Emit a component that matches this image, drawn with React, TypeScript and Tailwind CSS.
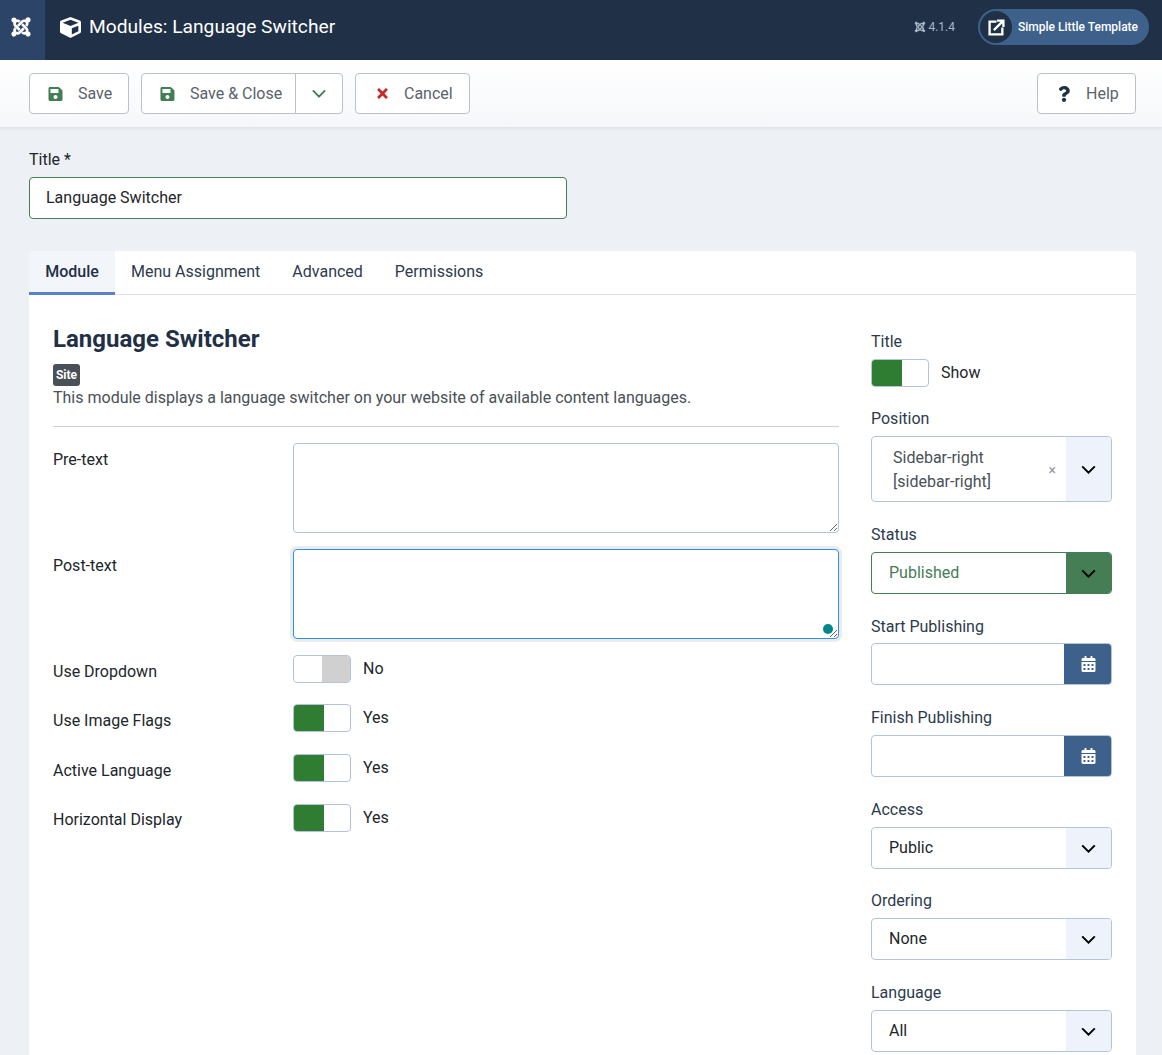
import { FaCube, FaJoomla, FaSave, FaTimes, FaQuestion, FaCalendarAlt } from "react-icons/fa";

function Chevron({ className = "" }: { className?: string }) {
  return (
    <svg viewBox="0 0 16 10" className={className} fill="none" stroke="currentColor" strokeWidth="2.2">
      <path d="M1 1.500l7 7 7-7" />
    </svg>
  );
}

function Toggle({ on, label }: { on: boolean; label: string }) {
  return (
    <div className="flex items-center">
      <div className="flex w-[58px] h-[28px] border border-[#b2c4dc] rounded-[4px] overflow-hidden bg-white">
        {on ? (
          <div className="w-[30px] bg-[#2e7d32]" />
        ) : (
          <>
            <div className="w-[28px]" />
            <div className="w-[28px] bg-[#d0d0d0]" />
          </>
        )}
      </div>
      <span className="ml-3 text-[#22262a]">{label}</span>
    </div>
  );
}

function Select({ value }: { value: string }) {
  return (
    <div className="flex h-[42px] border border-[#b2c4dc] rounded-[4px] overflow-hidden bg-white">
      <div className="flex-1 pl-[17px] leading-[40px] text-[#22262a]">{value}</div>
      <div className="w-[45px] bg-[#eef3fb] flex items-center justify-center text-black">
        <Chevron className="w-[15px] h-[9px]" />
      </div>
    </div>
  );
}

function DateField() {
  return (
    <div className="flex h-[42px] border border-[#b2c4dc] rounded-[4px] overflow-hidden bg-white">
      <div className="flex-1" />
      <div className="w-[48px] -my-px -mr-px bg-[#3e618c] flex items-center justify-center text-white">
        <FaCalendarAlt className="w-[15px] h-[16px]" />
      </div>
    </div>
  );
}

function ToolButton({ children, className = "" }: { children: React.ReactNode; className?: string }) {
  return (
    <div className={`flex items-center h-[41px] bg-white border border-[#b9c1cc] rounded-[4px] text-[#5a626c] whitespace-nowrap ${className}`}>
      {children}
    </div>
  );
}

export default function App() {
  return (
    <div className="h-[1055px] overflow-hidden bg-[#edf1f5] font-['Roboto',sans-serif] text-[16px] text-[#22262a]">
      {/* Header */}
      <header className="flex h-[60px] bg-[#1f3047] text-white">
        <div className="flex items-center justify-center w-[45px] h-full pb-[6px] pr-[4px] bg-[#2d4469]">
          <FaJoomla className="w-[22px] h-[22px]" />
        </div>
        <div className="flex flex-1 items-center pb-[6px]">
          <FaCube className="ml-[15px] w-[21px] h-[21px]" />
          <h1 className="ml-[8px] text-[19.2px] leading-[24px]">Modules: Language Switcher</h1>
          <div className="ml-auto flex items-center text-[12px] text-[#a9b6c6]">
            <FaJoomla className="w-[12px] h-[12px] mr-[2px]" />
            4.1.4
          </div>
          <div className="ml-[23px] mr-[13px] flex items-center w-[171px] h-[36px] rounded-full bg-[#3e618c] pl-[2px]">
            <div className="flex items-center justify-center w-[32px] h-[32px] rounded-full bg-[#1f3047]">
              <svg viewBox="0 0 16 16" className="w-[17px] h-[17px]" fill="none" stroke="white" strokeWidth="2.2">
                <path d="M8 2.500H1.500v12h12V8" />
                <path d="M5.500 10.500L13.500 2.500M8.500 1.500h6v6" />
              </svg>
            </div>
            <span className="ml-[6px] text-[12px] font-medium text-white whitespace-nowrap">Simple Little Template</span>
          </div>
        </div>
      </header>

      {/* Toolbar */}
      <div className="flex items-center h-[67px] pl-[29px] pr-[26px] bg-gradient-to-b from-white to-[#f5f7fa] shadow-[0_1px_3px_rgba(40,70,110,0.12)]">
        <ToolButton className="w-[100px] pl-[18px]">
          <FaSave className="w-[15px] h-[16px] text-[#457d54]" />
          <span className="ml-[15px]">Save</span>
        </ToolButton>
        <ToolButton className="ml-[12px] w-[202px] pl-[18px]">
          <FaSave className="w-[15px] h-[16px] text-[#457d54]" />
          <span className="ml-[15px]">Save &amp; Close</span>
          <div className="ml-[13px] w-[47px] h-full border-l border-[#b9c1cc] flex items-center justify-center text-[#457d54]">
            <Chevron className="w-[14px] h-[9px]" />
          </div>
        </ToolButton>
        <ToolButton className="ml-[12px] w-[115px] pl-[19px]">
          <FaTimes className="w-[15px] h-[15px] text-[#c52827]" />
          <span className="ml-[14px]">Cancel</span>
        </ToolButton>
        <ToolButton className="ml-auto w-[99px] pl-[19px]">
          <FaQuestion className="w-[14px] h-[16px] text-[#1f3047]" />
          <span className="ml-[15px]">Help</span>
        </ToolButton>
      </div>

      <main className="pl-[29px] pr-[26px]">
        <label className="block mt-[21px] leading-[24px]">Title *</label>
        <div className="mt-[5px] w-[538px] h-[42px] px-[16px] leading-[40px] bg-white border border-[#457d54] rounded-[4px]">
          Language Switcher
        </div>

        {/* Card */}
        <section className="mt-[32px] bg-white rounded-t-[4px]">
          <nav className="flex h-[44px] border-b border-[#dfe3ee]">
            <div className="w-[86px] h-[44px] text-center leading-[41px] font-medium text-[#1f3047] bg-[#f2f6fa] border-b-[3px] border-[#5b81c2]">
              Module
            </div>
            <div className="px-[16px] leading-[41px] text-[#2c3a4d]">Menu Assignment</div>
            <div className="px-[16px] leading-[41px] text-[#2c3a4d]">Advanced</div>
            <div className="px-[16px] leading-[41px] text-[#2c3a4d]">Permissions</div>
          </nav>

          <div className="flex px-[24px]">
            {/* Main column */}
            <div className="w-[786px] pt-[28px]">
              <h2 className="text-[24px] leading-[32px] font-bold text-[#1f3047]">Language Switcher</h2>
              <span className="block mt-[9px] mb-[1px] w-[27px] h-[22px] text-center rounded-[3px] bg-[#495057] text-white text-[12px] leading-[22px] font-bold">
                Site
              </span>
              <p className="leading-[22px] text-[#495057]">
                This module displays a language switcher on your website of available content languages.
              </p>
              <hr className="mt-[17px] border-[#d0d0d0]" />

              <div className="flex mt-[16px]">
                <label className="w-[240px] pt-[5px] leading-[24px]">Pre-text</label>
                <textarea className="w-[546px] h-[90px] bg-white border border-[#b2c4dc] rounded-[4px]" />
              </div>
              <div className="flex mt-[16px]">
                <label className="w-[240px] pt-[5px] leading-[24px]">Post-text</label>
                <div className="relative w-[546px] h-[90px]">
                  <textarea className="block w-full h-full bg-white border border-[#2f8fef] rounded-[4px] shadow-[0_0_0_3px_rgba(200,200,200,0.35)] outline-none" />
                  <div className="absolute right-[6px] bottom-[5px] w-[10px] h-[10px] rounded-full bg-[#00868b]" />
                </div>
              </div>
              <div className="flex items-center mt-[16px] h-[28px]">
                <label className="w-[240px] pt-[5px]">Use Dropdown</label>
                <Toggle on={false} label="No" />
              </div>
              <div className="flex items-center mt-[21px] h-[28px]">
                <label className="w-[240px] pt-[6px]">Use Image Flags</label>
                <Toggle on label="Yes" />
              </div>
              <div className="flex items-center mt-[22px] h-[28px]">
                <label className="w-[240px] pt-[6px]">Active Language</label>
                <Toggle on label="Yes" />
              </div>
              <div className="flex items-center mt-[22px] h-[28px]">
                <label className="w-[240px] pt-[3px]">Horizontal Display</label>
                <Toggle on label="Yes" />
              </div>
            </div>

            {/* Sidebar */}
            <aside className="ml-[32px] w-[241px] pt-[35px] pb-[40px] text-[#2c3a4d]">
              <label className="block leading-[24px]">Title</label>
              <div className="mt-[5px]">
                <Toggle on label="Show" />
              </div>
              <label className="block mt-[20px] leading-[24px]">Position</label>
              <div className="mt-[5px] flex h-[66px] border border-[#b2c4dc] rounded-[4px] overflow-hidden bg-white">
                <div className="flex-1 pl-[21px] pt-[9px] leading-[24px] text-[#495057]">
                  Sidebar-right
                  <br />
                  [sidebar-right]
                </div>
                <div className="self-center mt-[2px] mr-[10px] text-[#999] text-[14px]">×</div>
                <div className="w-[45px] bg-[#eef3fb] flex items-center justify-center text-black">
                  <Chevron className="w-[15px] h-[9px]" />
                </div>
              </div>
              <label className="block mt-[21px] leading-[24px]">Status</label>
              <div className="mt-[5px] flex h-[42px] border border-[#457d54] rounded-[4px] overflow-hidden bg-white">
                <div className="flex-1 pl-[17px] leading-[40px] text-[#457d54]">Published</div>
                <div className="w-[45px] bg-[#457d54] flex items-center justify-center text-black">
                  <Chevron className="w-[15px] h-[9px]" />
                </div>
              </div>
              <label className="block mt-[21px] leading-[24px]">Start Publishing</label>
              <div className="mt-[4px]">
                <DateField />
              </div>
              <label className="block mt-[21px] leading-[24px]">Finish Publishing</label>
              <div className="mt-[5px]">
                <DateField />
              </div>
              <label className="block mt-[21px] leading-[24px]">Access</label>
              <div className="mt-[5px]">
                <Select value="Public" />
              </div>
              <label className="block mt-[20px] leading-[24px]">Ordering</label>
              <div className="mt-[5px]">
                <Select value="None" />
              </div>
              <label className="block mt-[21px] leading-[24px]">Language</label>
              <div className="mt-[5px]">
                <Select value="All" />
              </div>
            </aside>
          </div>
        </section>
      </main>
    </div>
  );
}
